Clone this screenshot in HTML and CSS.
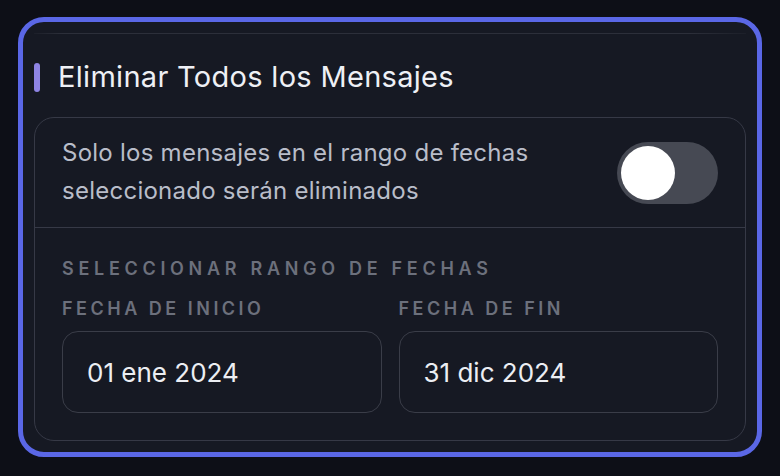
FILE: index.html
```html
<!DOCTYPE html>
<html lang="es">
<head>
<meta charset="utf-8">
<link rel="stylesheet" href="styles.css">
</head>
<body>
<div class="frame">
  <div class="topline"></div>
  <div class="heading">
    <span class="accent"></span>
    <h2 class="title">Eliminar Todos los Mensajes</h2>
  </div>
  <div class="panel">
    <div class="toggle-row">
      <p class="toggle-text">Solo los mensajes en el rango de fechas<br>seleccionado serán eliminados</p>
      <div class="switch"><span class="knob"></span></div>
    </div>
    <div class="range">
      <div class="range-title">SELECCIONAR RANGO DE FECHAS</div>
      <div class="fields">
        <div class="field">
          <div class="label">FECHA DE INICIO</div>
          <div class="input">01 ene 2024</div>
        </div>
        <div class="field">
          <div class="label">FECHA DE FIN</div>
          <div class="input">31 dic 2024</div>
        </div>
      </div>
    </div>
  </div>
</div>
</body>
</html>
```
FILE: styles.css
```css
html, body {
  margin: 0;
  padding: 0;
}
body {
  background: #0d0f17;
  font-family: Inter, "Noto Sans", sans-serif;
  width: 780px;
  height: 476px;
  overflow: hidden;
}
.frame {
  margin: 17px 18px 0;
  height: 440px;
  box-sizing: border-box;
  border: 5px solid #5a67e6;
  border-radius: 26px;
  background: #161923;
  padding: 0 11px 11px;
  display: flex;
  flex-direction: column;
}
.topline {
  margin-top: 11px;
  height: 1px;
  background: linear-gradient(90deg, #1c1f29 0, #2c2f3a 4%, #2c2f3a 92%, #1c1f29 100%);
}
.heading {
  height: 80px;
  padding-top: 3px;
  display: flex;
  align-items: center;
  flex-shrink: 0;
}
.accent {
  width: 6px;
  height: 29px;
  border-radius: 3px;
  background: #8e84e4;
  margin-right: 18px;
}
.title {
  margin: 0;
  font-size: 29px;
  font-weight: 400;
  letter-spacing: 0.3px;
  color: #eef0f5;
  line-height: 34px;
}
.panel {
  flex: 1;
  border: 1px solid #363946;
  border-radius: 20px;
  background: #161923;
  display: flex;
  flex-direction: column;
}
.toggle-row {
  height: 110px;
  box-sizing: border-box;
  padding: 0 27px;
  display: flex;
  align-items: center;
  justify-content: space-between;
  border-bottom: 1px solid #363946;
}
.toggle-text {
  margin: 0 0 2px;
  font-size: 24px;
  line-height: 38px;
  letter-spacing: 0.25px;
  color: #b9bdc9;
}
.switch {
  width: 101px;
  height: 62px;
  box-sizing: border-box;
  padding: 4px;
  border-radius: 31px;
  background: #464953;
  display: flex;
  align-items: center;
}
.knob {
  width: 54px;
  height: 54px;
  border-radius: 50%;
  background: #ffffff;
}
.range {
  padding: 29px 27px 0;
}
.range-title, .label {
  font-size: 18px;
  line-height: 24px;
  font-weight: 600;
  letter-spacing: 3.5px;
  color: #6c707c;
}
.range-title {
  letter-spacing: 4.7px;
}
.fields {
  margin-top: 16px;
  display: grid;
  grid-template-columns: 1fr 1fr;
  gap: 17px;
}
.label {
  margin-bottom: 10px;
}
.input {
  height: 82px;
  box-sizing: border-box;
  border: 1px solid #3a3d48;
  border-radius: 16px;
  padding-left: 24px;
  display: flex;
  align-items: center;
  font-size: 26px;
  color: #eceef3;
}
```
